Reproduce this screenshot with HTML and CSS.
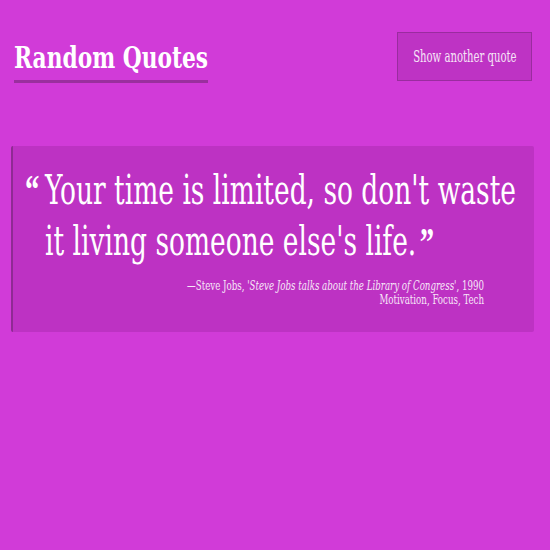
FILE: index.html
```html
<!DOCTYPE html>
<html>
<head>
<meta charset="utf-8">
<link rel="stylesheet" href="styles.css">
</head>
<body>
<header class="top">
  <h1 class="title">Random Quotes</h1>
  <button class="btn"><span class="btn-label">Show another quote</span></button>
</header>
<section class="card">
  <div class="quote">
    <span class="mark open">“</span>
    <p class="text">Your time is limited, so don't waste<br>it living someone else's life.<span class="mark close">”</span></p>
  </div>
  <div class="meta">
    <div class="cite">—Steve Jobs, <em>'Steve Jobs talks about the Library of Congress'</em>, 1990</div>
    <div class="tags">Motivation, Focus, Tech</div>
  </div>
</section>
</body>
</html>
```
FILE: styles.css
```css
html, body {
  margin: 0;
  padding: 0;
  background: #d13bd8;
  width: 550px;
  height: 550px;
  overflow: hidden;
}
body {
  font-family: "DejaVu Serif Condensed", "DejaVu Serif", serif;
  color: #fff;
}
.top {
  display: flex;
  justify-content: space-between;
  align-items: flex-start;
  height: 49px;
  padding: 32px 18px 0 14px;
}
.title {
  margin: 7px 0 0 0;
  font-size: 30px;
  font-weight: bold;
  line-height: 38px;
  white-space: nowrap;
  border-bottom: 3px solid #9a2f9e;
  padding-bottom: 3px;
  transform: scaleX(0.805);
  transform-origin: left top;
}
.btn {
  display: flex;
  justify-content: center;
  align-items: center;
  width: 135px;
  height: 49px;
  background: #be33c4;
  border: 1px solid #9a2c9f;
  color: #f6e4f7;
  font-family: inherit;
  font-size: 16px;
  padding: 0;
  cursor: pointer;
}
.btn-label {
  flex: none;
  white-space: nowrap;
  transform: scaleX(0.7);
}
.card {
  box-sizing: border-box;
  height: 186px;
  margin: 65px 16px 0 11px;
  background: #bd32c3;
  border-left: 2px solid #8f2a94;
  border-radius: 2px;
  padding: 19px 0 0 12px;
}
.quote {
  display: flex;
  align-items: flex-start;
  white-space: nowrap;
  font-size: 41px;
  line-height: 51px;
  transform: scaleX(0.718);
  transform-origin: left top;
}
.mark {
  font-family: "Liberation Serif", serif;
  font-weight: bold;
  font-size: 40px;
  line-height: 51px;
}
.open {
  flex: none;
  width: 28px;
  margin-top: -1px;
}
.close {
  display: inline-block;
  vertical-align: top;
  margin-left: 5px;
}
.text {
  margin: 0;
}
.meta {
  margin: 12px 50px 0 0;
  text-align: right;
  white-space: nowrap;
  font-size: 13px;
  line-height: 13.5px;
  color: #f7e6f8;
  transform: scaleX(0.74);
  transform-origin: right top;
}
.cite em {
  font-style: italic;
}
```
